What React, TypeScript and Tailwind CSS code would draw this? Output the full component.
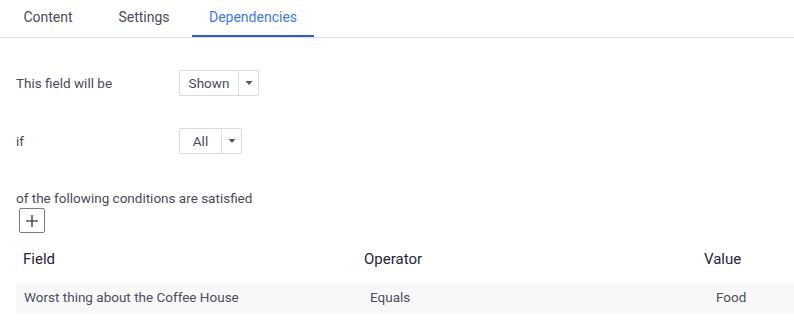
import * as React from "react"

function Caret() {
  return (
    <svg width="8" height="4" viewBox="0 0 8 4" className="block">
      <path d="M0.5 0 L7.5 0 L4 4 Z" fill="#555563" />
    </svg>
  )
}

function Dropdown({ value, width }: { value: string; width: string }) {
  return (
    <div className="flex h-[26px] items-stretch rounded-[2px] border border-[#dcdce0] bg-white text-[13.5px] text-[#4a4a5a]">
      <div className={`flex items-center justify-center ${width}`}>{value}</div>
      <div className="flex w-[20px] items-center justify-center border-l border-[#dcdce0]">
        <Caret />
      </div>
    </div>
  )
}

export default function App() {
  const tabs = [
    { label: "Content", w: "w-[96px]" },
    { label: "Settings", w: "w-[96px]" },
    { label: "Dependencies", w: "w-[122px]", active: true },
  ]

  return (
    <div
      className="h-[322px] w-[794px] overflow-hidden bg-white"
      style={{ fontFamily: "Roboto, 'Noto Sans', sans-serif" }}
    >
      <div className="flex h-[38px] border-b border-[#dedee2]">
        {tabs.map((t) => (
          <div
            key={t.label}
            className={`flex h-[37px] items-center justify-center border-b-2 text-[14px] ${t.w} ${
              t.active ? "border-[#1f5ff0] text-[#3a7af2]" : "border-transparent text-[#4a4a5c]"
            }`}
          >
            {t.label}
          </div>
        ))}
      </div>

      <div className="pl-4">
        <div className="mt-[32px] flex items-center">
          <div className="w-[163px] text-[13.5px] text-[#4b4b5c]">This field will be</div>
          <Dropdown value="Shown" width="w-[58px]" />
        </div>

        <div className="mt-[32px] flex items-center">
          <div className="w-[163px] text-[13.5px] text-[#4b4b5c]">if</div>
          <Dropdown value="All" width="w-[41px]" />
        </div>

        <div className="mt-[35px] text-[13.5px] leading-[18px] text-[#4b4b5c]">
          of the following conditions are satisfied
        </div>

        <button className="ml-[3px] mt-[1px] flex h-[25px] w-[26px] items-center justify-center rounded-[2px] border border-[#7a7a80] bg-white">
          <svg width="14" height="14" viewBox="0 0 14 14">
            <path d="M7 1 V13 M1 7 H13" stroke="#555560" strokeWidth="1.6" />
          </svg>
        </button>

        <div className="mt-[8px] flex h-[36px] items-center text-[15px] text-[#24243a]">
          <div className="w-[348px] pl-[7px]">Field</div>
          <div className="w-[340px]">Operator</div>
          <div>Value</div>
        </div>

        <div className="mt-[5px] flex h-[31px] items-center bg-[#f8f8f9] text-[13.5px] text-[#4e4e5f]">
          <div className="w-[354px] pl-[8px]">Worst thing about the Coffee House</div>
          <div className="w-[346px]">Equals</div>
          <div>Food</div>
        </div>
      </div>
    </div>
  )
}
